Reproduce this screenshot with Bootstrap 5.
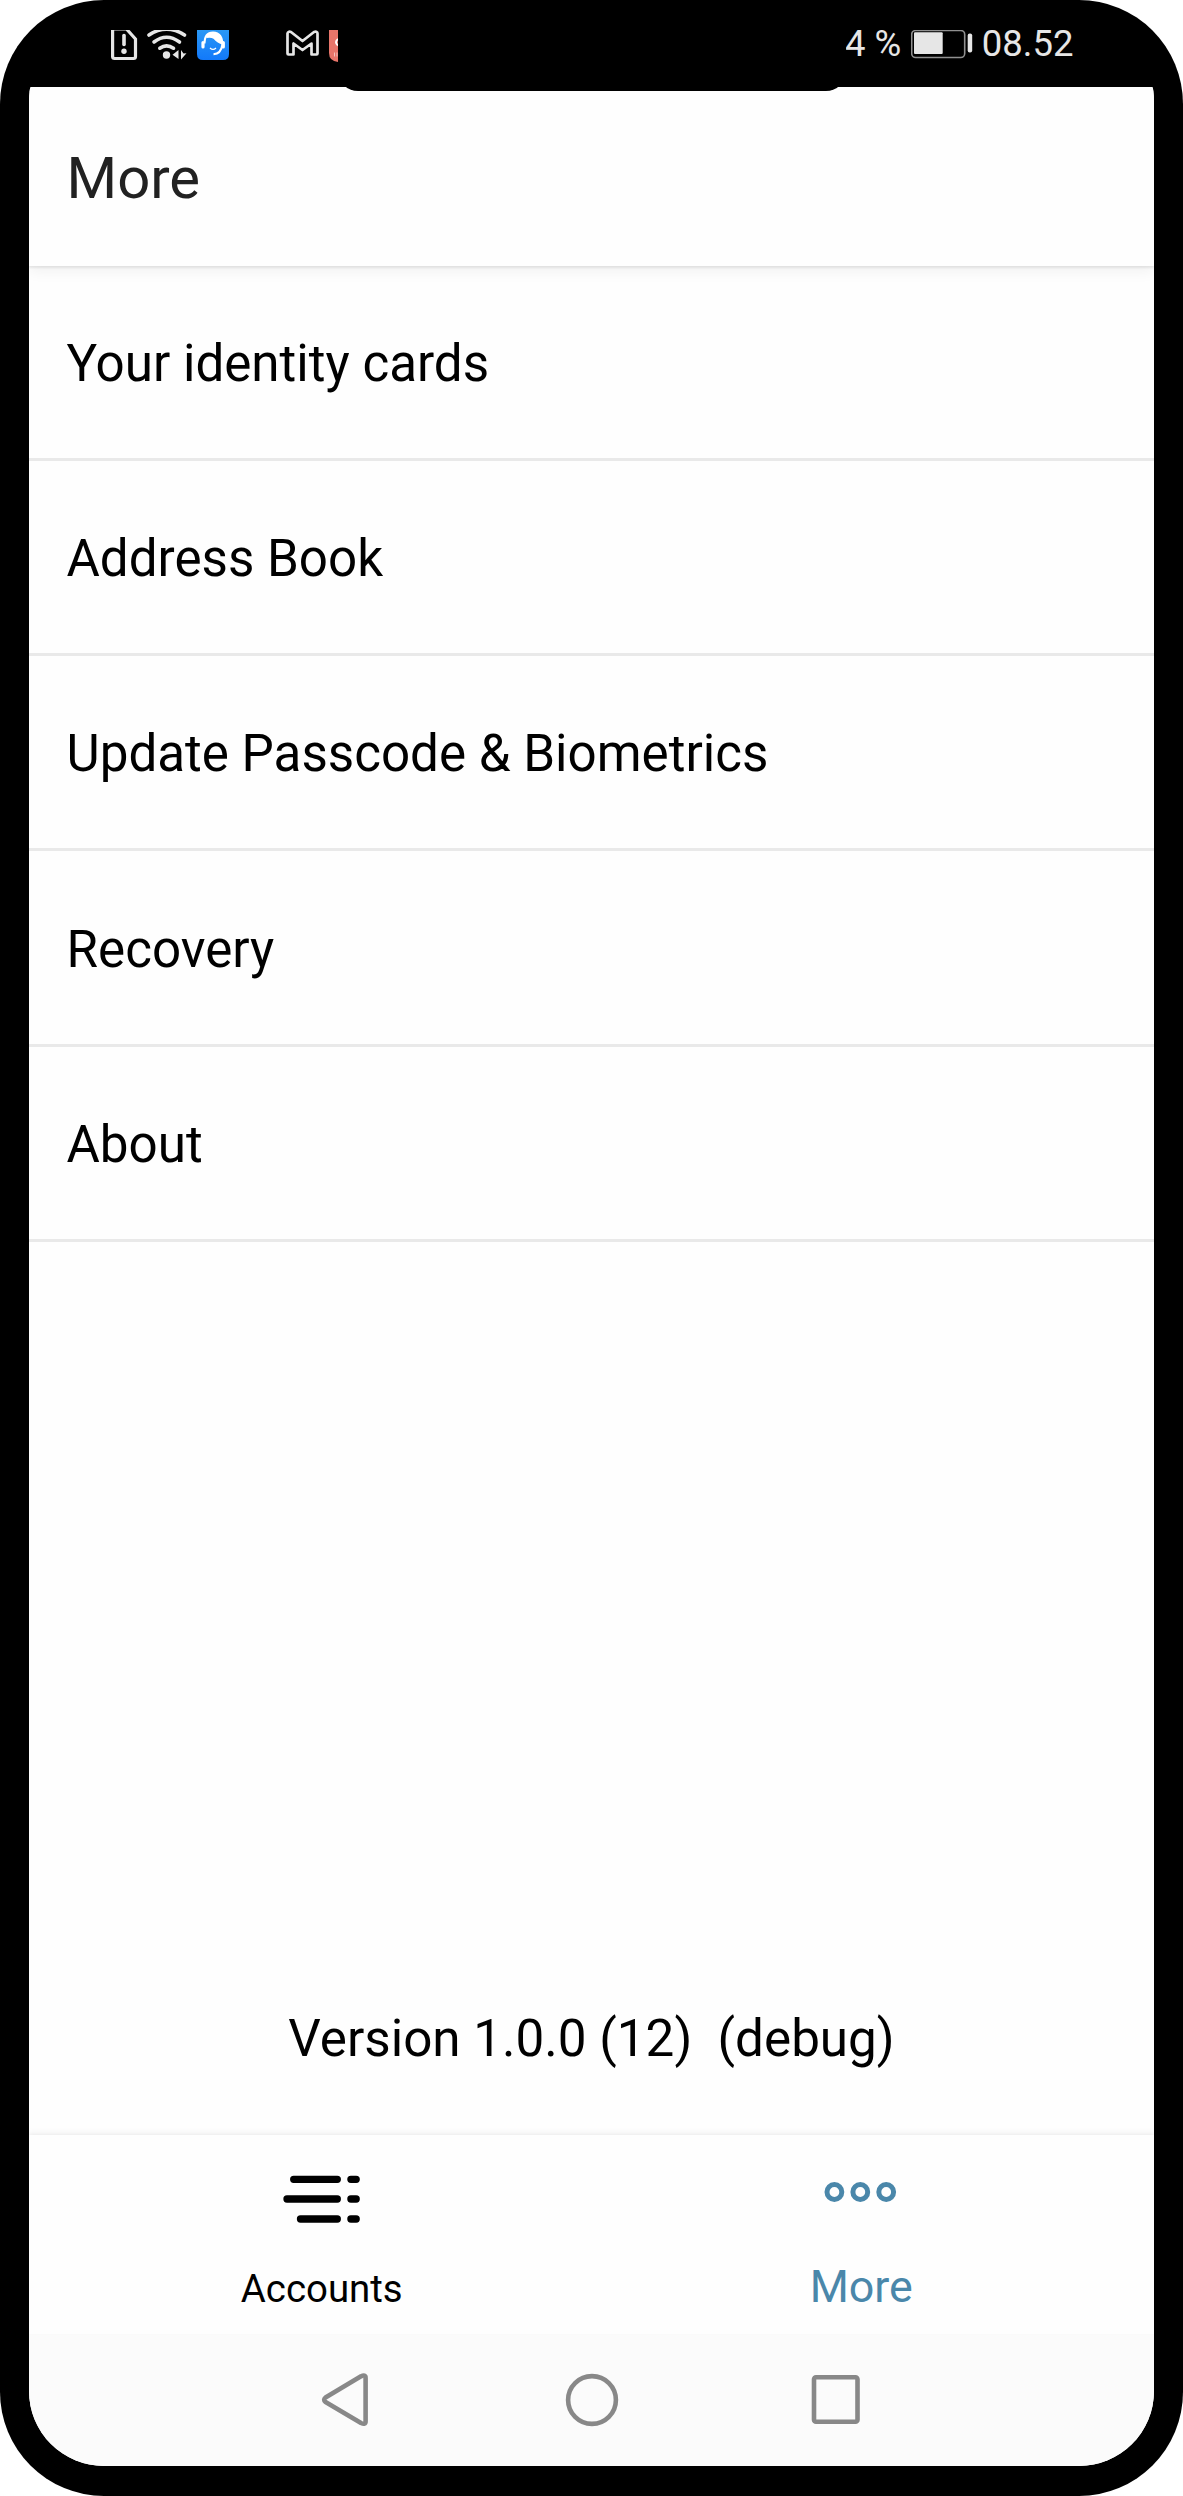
<!DOCTYPE html>
<html lang="en">
<head>
<meta charset="utf-8">
<meta name="viewport" content="width=device-width, initial-scale=1">
<title>More</title>
<link href="https://cdn.jsdelivr.net/npm/bootstrap@5.3.0/dist/css/bootstrap.min.css" rel="stylesheet">
<style>
  body { font-family: Roboto, "Noto Sans", sans-serif; background: #fff; color: #000; }
  .device { width: 1183px; height: 2496px; background: #000; border-radius: 104px; padding: 0 29px 30px; overflow: hidden; }
  .screen { border-radius: 2px 2px 75px 75px / 15px 15px 75px 75px; overflow: hidden; background: #fefefe; min-height: 0; }
  .statusbar { height: 86.5px; color: #e6e6e6; flex: none; padding: 30px 80.5px 0 82px; }
  .statusbar svg { display: block; flex: none; }
  .status-text { font-size: 36.5px; line-height: 44px; margin-top: -8px; white-space: pre; }
  .battery { margin: 0 9px 0 9.5px; }
  .notch { position: absolute; left: 50%; top: 0; width: 508px; height: 90.5px; margin-left: -254px; background: #000; border-radius: 0 0 20px 20px; z-index: 3; }
  .appbar { height: 179px; flex: none; padding: 6px 37.5px 0; background: #fefefe; z-index: 2; box-shadow: 0 2px 2px rgba(0,0,0,.08), 0 6px 13px rgba(0,0,0,.05); }
  .appbar h1 { font-size: 58px; font-weight: 400; line-height: 1.2; color: #212121; }
  .menu-row { height: 195.3px; padding: 3.6px 37.5px 0 !important; font-size: 51.15px; line-height: 1.2; color: #000 !important; background: transparent !important; border-width: 0 0 3px !important; border-color: #e9e9e9 !important; }
  .version { font-size: 51.2px; line-height: 60px; white-space: pre; padding-bottom: 66px; }
  .tabbar { height: 199px; flex: none; background: #fefefe; padding: 0 23px; box-shadow: 0 -1px 3px rgba(0,0,0,.04), 0 -4px 5px rgba(0,0,0,.03); z-index: 1; }
  .tab { padding-top: 35px; color: #000; text-decoration: none; }
  .tab svg { display: block; margin: 0 auto; }
  .tab-label { font-size: 38.4px; line-height: 50px; height: 50px; margin-top: 36px; }
  .tab.active { color: #4a87aa; }
  .tab.active .tab-label { font-size: 44.8px; margin-top: 34px; }
  .sysbar { height: 132px; flex: none; background: #fbfbfb; padding: 0 290px; }
</style>
</head>
<body>
<div class="device d-flex flex-column position-relative">
  <div class="notch"></div>
  <div class="statusbar d-flex align-items-start justify-content-between">
    <svg width="228" height="32" viewBox="111 30 228 32" fill="none" stroke="#e6e6e6">
      <!-- SIM alert -->
      <path d="M112.600 28V56.500Q112.600 58.500 114.600 58.500H133.500Q135.500 58.500 135.500 56.500V39L126.500 29H112.600" stroke-width="3.200"/>
      <path d="M124 35.500V44.500" stroke-width="3.600" stroke-linecap="round"/>
      <circle cx="124" cy="51.300" r="2.700" fill="#e6e6e6" stroke="none"/>
      <!-- Wi-Fi -->
      <g stroke-width="3.600" stroke-linecap="round">
        <path d="M149 35Q166.500 23.500 184.500 35"/>
        <path d="M154 42Q166.500 32.500 179.500 42"/>
        <path d="M159.800 48.200Q166.500 43.500 173.500 48.200"/>
      </g>
      <circle cx="166.500" cy="55" r="3.700" fill="#e6e6e6" stroke="none"/>
      <path d="M178.500 50V59L172.500 54.800ZM181 50V59.500L186.500 53.200L183.500 53.500Z" fill="#e6e6e6" stroke="none"/>
      <!-- Support app -->
      <defs><linearGradient id="blue" x1="0" y1="0" x2="0" y2="1"><stop offset="0" stop-color="#2a98f5"/><stop offset="1" stop-color="#1279fa"/></linearGradient></defs>
      <path d="M197 30H229V54Q229 60 223 60H203Q197 60 197 54Z" fill="url(#blue)" stroke="none"/>
      <path d="M206.500 35Q210 32 214 32.200Q222.500 34 222.500 44.500Q217.500 43.500 213.500 38.800Q211 37 206.500 38Z" fill="#fff" stroke="none"/>
      <path d="M204.500 43.500Q204.500 32.800 213 32.600Q222.800 33 222.300 45Q221 53.800 213.500 54.200" stroke="#fff" stroke-width="2"/>
      <path d="M203 42.500V47M223.300 42.500V47" stroke="#fff" stroke-width="3.200" stroke-linecap="round"/>
      <path d="M210 48Q213 50.800 216 48" stroke="#fff" stroke-width="1.300"/>
      <!-- Mail -->
      <path d="M287.500 53.500V33.500Q288 31 291 32L302.500 41L314 32Q317.500 31 317.500 33.500V53.500Q317.500 54.500 316.500 54.500H311.500V43.500L302.500 50L293.500 43.500V54.500H288.500Q287.500 54.500 287.500 53.500Z" stroke-width="2.700" stroke-linejoin="round"/>
      <!-- Partly hidden app -->
      <path d="M329 30H338V62Q329 61 329 53Z" fill="#e8756a" stroke="none"/>
      <path d="M338 39Q334 42 338 45.500" stroke="#fff" stroke-width="2"/>
      <path d="M334.500 52.500V56.500M337 52.500V56.500" stroke="#f6c0bb" stroke-width="1"/>
    </svg>
    <div class="d-flex align-items-start">
      <span class="status-text">4 %</span>
      <svg class="battery" width="62" height="29" viewBox="911 30 62 29">
        <rect x="911.700" y="30.500" width="53" height="27" rx="4" fill="none" stroke="#909090" stroke-width="1.600"/>
        <rect x="914" y="32.300" width="28.700" height="21.700" rx="1" fill="#e6e6e6"/>
        <rect x="967.700" y="33.500" width="4.500" height="19" rx="2" fill="#e6e6e6"/>
      </svg>
      <span class="status-text">08.52</span>
    </div>
  </div>

  <div class="screen d-flex flex-column flex-grow-1">
    <header class="appbar d-flex align-items-center"><h1 class="m-0">More</h1></header>

    <main class="flex-grow-1 d-flex flex-column">
      <div class="list-group list-group-flush">
        <a class="list-group-item menu-row d-flex align-items-center">Your identity cards</a>
        <a class="list-group-item menu-row d-flex align-items-center">Address Book</a>
        <a class="list-group-item menu-row d-flex align-items-center">Update Passcode &amp; Biometrics</a>
        <a class="list-group-item menu-row d-flex align-items-center">Recovery</a>
        <a class="list-group-item menu-row d-flex align-items-center">About</a>
      </div>
      <div class="version mt-auto text-center">Version 1.0.0 (12)  (debug)</div>
    </main>

    <nav class="tabbar d-flex text-center">
      <a class="tab col">
        <svg width="78" height="58" viewBox="283 2170 78 58" stroke="#000" stroke-width="7.300" stroke-linecap="round">
          <path d="M293.700 2179.300H337.300M350.900 2179.300H356.200M287 2199H337.300M350.900 2199H356.200M300.500 2219H337.300M350.900 2219H356.200"/>
        </svg>
        <div class="tab-label">Accounts</div>
      </a>
      <a class="tab col active">
        <svg width="78" height="58" viewBox="822 2170 78 58" fill="none" stroke="#4a87aa" stroke-width="5">
          <circle cx="834.400" cy="2192" r="7.400"/><circle cx="860.300" cy="2192" r="7.400"/><circle cx="886.200" cy="2192" r="7.400"/>
        </svg>
        <div class="tab-label">More</div>
      </a>
    </nav>

    <div class="sysbar d-flex align-items-center justify-content-between">
      <svg width="54" height="56" viewBox="319 2372 54 56" fill="none" stroke="#888" stroke-width="4.600" stroke-linejoin="round">
        <path d="M325.500 2397.500L361 2376.300Q365.600 2374.300 365.600 2378V2421.500Q365.600 2425 361 2423L325.500 2402Q322.800 2399.700 325.500 2397.500Z"/>
      </svg>
      <svg width="56" height="56" viewBox="0 0 56 56" fill="none" stroke="#888" stroke-width="4.600"><circle cx="28" cy="28" r="23.900"/></svg>
      <svg width="54" height="56" viewBox="810 2372 54 56" fill="none" stroke="#888" stroke-width="4.600"><rect x="814" y="2377.300" width="43.500" height="44.500" rx="2"/></svg>
    </div>
  </div>
</div>
<script src="https://cdn.jsdelivr.net/npm/bootstrap@5.3.0/dist/js/bootstrap.bundle.min.js"></script>
</body>
</html>
